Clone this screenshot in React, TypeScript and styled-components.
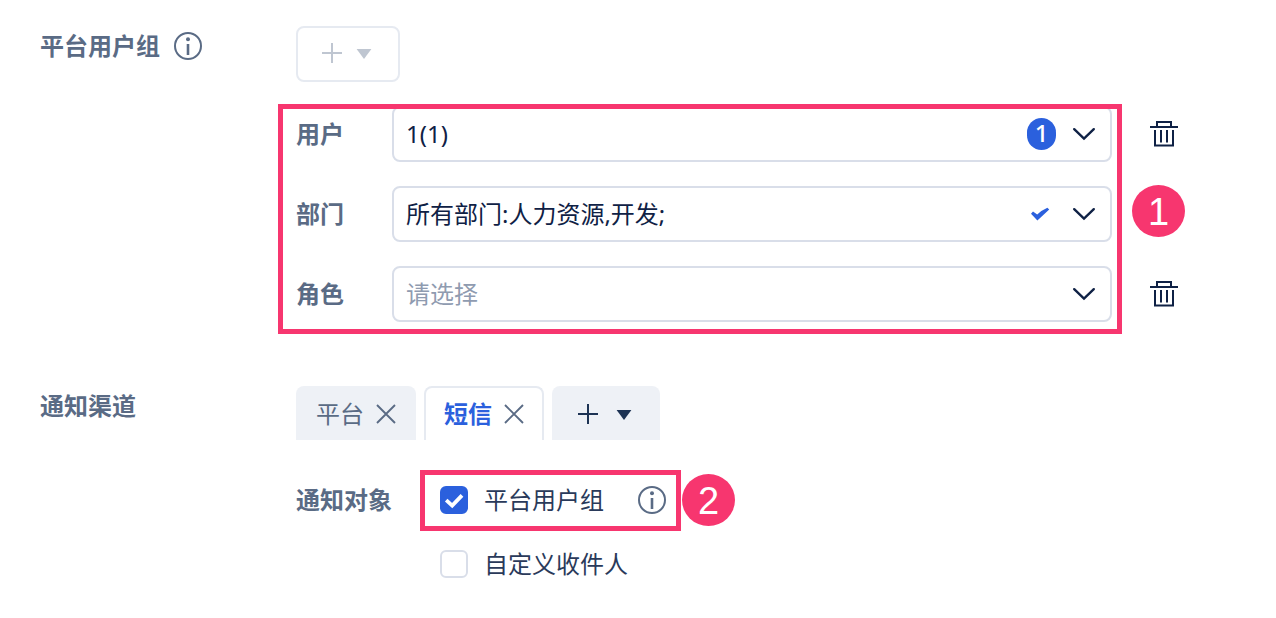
import React from 'react';
import styled, { createGlobalStyle } from 'styled-components';

const color = {
  label: '#5a6b85',
  ink: '#0f2145',
  text: '#2a3a5a',
  muted: '#8f9bb0',
  border: '#d9dee9',
  softBorder: '#e6eaf1',
  disabled: '#bfc6d1',
  tab: '#eef1f6',
  primary: '#2b60dd',
  mark: '#f7366f',
};

const GlobalStyle = createGlobalStyle`
  *, *::before, *::after { box-sizing: border-box; }
  body {
    margin: 0;
    background: #fff;
    color: ${color.text};
    font-family: "Noto Sans", "Noto Sans CJK SC", sans-serif;
    font-size: 24px;
    line-height: 40px;
  }
  button, select, input { font: inherit; color: inherit; margin: 0; }
  svg { display: block; flex: none; }
`;

const Page = styled.main`
  display: flex;
  flex-direction: column;
  gap: 64px;
  padding: 26px 96px 32px 40px;
`;

const Section = styled.section`
  display: grid;
  grid-template-columns: 256px minmax(0, 1fr);
  align-items: start;
`;

const SectionTitle = styled.h2`
  display: flex;
  align-items: center;
  gap: 14px;
  margin: 0;
  font-size: 24px;
  font-weight: 700;
  color: ${color.label};
`;

const Stack = styled.div<{ $gap: number }>`
  position: relative;
  display: flex;
  flex-direction: column;
  gap: ${(p) => p.$gap}px;
`;

const IconButton = styled.button`
  display: flex;
  align-items: center;
  justify-content: center;
  padding: 0;
  border: 0;
  background: none;
  color: ${color.label};
  cursor: pointer;
`;

const AddButton = styled(IconButton)`
  justify-content: flex-start;
  gap: 14px;
  width: 104px;
  height: 56px;
  padding: 0 24px 2px;
  border: 2px solid ${color.softBorder};
  border-radius: 8px;
  background: #fff;
  color: ${color.disabled};
`;

const AddTabButton = styled(IconButton)`
  justify-content: flex-start;
  gap: 18px;
  width: 108px;
  height: 54px;
  padding: 2px 26px 0;
  border-radius: 8px 8px 0 0;
  background: ${color.tab};
  color: #1d3354;
`;

const FieldRow = styled.div`
  display: grid;
  grid-template-columns: 96px minmax(0, 1fr) 32px;
  align-items: center;
`;

const FieldLabel = styled.label`
  font-weight: 700;
  color: ${color.label};
`;

const SelectWrap = styled.div`
  position: relative;
  margin-right: 36px;
`;

const Select = styled.select<{ $empty?: boolean }>`
  display: block;
  appearance: none;
  width: 100%;
  height: 56px;
  padding: 0 96px 0 12px;
  border: 2px solid ${color.border};
  border-radius: 8px;
  background: #fff;
  color: ${(p) => (p.$empty ? color.muted : color.ink)};
`;

const SelectAdornment = styled.div`
  position: absolute;
  top: 0;
  right: 16px;
  bottom: 0;
  display: flex;
  align-items: center;
  gap: 16px;
  color: ${color.ink};
  pointer-events: none;
`;

const Count = styled.span`
  width: 29px;
  height: 32px;
  border-radius: 16px;
  background: ${color.primary};
  color: #fff;
  font-weight: 500;
  line-height: 30px;
  text-align: center;
`;

const Tabs = styled.div`
  display: flex;
  gap: 8px;
`;

const Tab = styled.div<{ $active?: boolean }>`
  display: flex;
  align-items: center;
  gap: 12px;
  height: 54px;
  padding: ${(p) => (p.$active ? '0 18px' : '2px 20px 0')};
  border: ${(p) => (p.$active ? `2px solid ${color.softBorder}` : '0')};
  border-bottom: 0;
  border-radius: 8px 8px 0 0;
  background: ${(p) => (p.$active ? '#fff' : color.tab)};
`;

const TabName = styled.button<{ $active?: boolean }>`
  padding: 0;
  border: 0;
  background: none;
  color: ${(p) => (p.$active ? color.primary : color.label)};
  font-weight: ${(p) => (p.$active ? 700 : 400)};
  cursor: pointer;
`;

const Recipients = styled.div`
  display: grid;
  grid-template-columns: 144px minmax(0, 1fr);
  align-items: start;
`;

const GroupName = styled.span`
  font-weight: 700;
  color: ${color.label};
`;

const Option = styled.div`
  position: relative;
  display: flex;
  align-items: center;
  gap: 34px;
  width: fit-content;
`;

const OptionLabel = styled.label`
  display: flex;
  align-items: center;
  gap: 16px;
`;

const CheckWrap = styled.span`
  display: grid;
  place-items: center;

  > * { grid-area: 1 / 1; }
  > svg { visibility: hidden; pointer-events: none; }
  > input:checked + svg { visibility: visible; }
`;

const Checkbox = styled.input`
  appearance: none;
  width: 28px;
  height: 28px;
  border: 2px solid ${color.border};
  border-radius: 6px;
  background: #fff;

  &:checked {
    border-color: ${color.primary};
    background: ${color.primary};
  }
`;

const Highlight = styled.div<{ $inset: string }>`
  position: absolute;
  inset: ${(p) => p.$inset};
  border: 5px solid ${color.mark};
  pointer-events: none;
`;

const StepMark = styled.span<{ $top: number; $gap: number }>`
  position: absolute;
  top: ${(p) => p.$top}px;
  left: calc(100% + ${(p) => p.$gap}px);
  width: 53px;
  height: 52px;
  border-radius: 50%;
  background: ${color.mark};
  color: #fff;
  font-family: "Liberation Sans", sans-serif;
  font-size: 38px;
  line-height: 54px;
  text-align: center;
`;

const InfoIcon = () => (
  <svg width="28" height="28" viewBox="0 0 28 28" fill="none" aria-hidden="true">
    <circle cx="14" cy="14" r="13" stroke="currentColor" strokeWidth="2" />
    <circle cx="14" cy="7.2" r="2" fill="currentColor" />
    <path d="M14 12v11" stroke="currentColor" strokeWidth="2.6" />
  </svg>
);

const PlusIcon = () => (
  <svg width="20" height="20" viewBox="0 0 20 20" fill="none" aria-hidden="true">
    <path d="M10 0v20M0 10h20" stroke="currentColor" strokeWidth="2" />
  </svg>
);

const CaretIcon = () => (
  <svg width="16" height="20" viewBox="0 0 16 20" aria-hidden="true">
    <path d="M0.6 6h14.8L8 16z" fill="currentColor" />
  </svg>
);

const ChevronIcon = () => (
  <svg width="24" height="24" viewBox="0 0 24 24" fill="none" aria-hidden="true">
    <path d="M2.2 7.2L12 16.6l9.8-9.4" stroke="currentColor" strokeWidth="2.4" strokeLinecap="round" />
  </svg>
);

const TickIcon = () => (
  <svg width="32" height="24" viewBox="0 0 32 24" aria-hidden="true">
    <path
      d="M7 11.8L9 9.6l4.2 2.8Q17.5 8.4 23.4 5.8L25.2 7.4 13.4 18.6z"
      fill={color.primary}
    />
  </svg>
);

const CheckIcon = () => (
  <svg width="28" height="28" viewBox="0 0 28 28" fill="none" aria-hidden="true">
    <path d="M6.2 14.2l6 5.4L22 9.4" stroke="#fff" strokeWidth="3.8" />
  </svg>
);

const CloseIcon = () => (
  <svg width="20" height="20" viewBox="0 0 20 20" fill="none" aria-hidden="true">
    <path d="M1 1l18 18M19 1L1 19" stroke="currentColor" strokeWidth="1.9" />
  </svg>
);

const TrashIcon = () => (
  <svg width="28" height="28" viewBox="0 0 28 28" fill="none" stroke={color.ink} strokeWidth="2" aria-hidden="true">
    <path d="M0 7h28M7 7V2h14v5M5 10v15.5h18V10M11 10v12.5M17 10v12.5" />
  </svg>
);

type FieldProps = {
  id: string;
  label: string;
  value: string;
  empty?: boolean;
  status?: React.ReactNode;
  removable?: boolean;
};

const Field = ({ id, label, value, empty, status, removable }: FieldProps) => (
  <FieldRow>
    <FieldLabel htmlFor={id}>{label}</FieldLabel>
    <SelectWrap>
      <Select id={id} $empty={empty}>
        <option>{value}</option>
      </Select>
      <SelectAdornment>
        {status}
        <ChevronIcon />
      </SelectAdornment>
    </SelectWrap>
    {removable && (
      <IconButton type="button" aria-label={`删除${label}`}>
        <TrashIcon />
      </IconButton>
    )}
  </FieldRow>
);

const CheckOption = ({ label, checked }: { label: string; checked?: boolean }) => (
  <OptionLabel>
    <CheckWrap>
      <Checkbox type="checkbox" defaultChecked={checked} />
      <CheckIcon />
    </CheckWrap>
    {label}
  </OptionLabel>
);

const ChannelTab = ({ name, active }: { name: string; active?: boolean }) => (
  <Tab $active={active}>
    <TabName type="button" $active={active}>{name}</TabName>
    <IconButton type="button" aria-label={`关闭${name}`}>
      <CloseIcon />
    </IconButton>
  </Tab>
);

export default function App() {
  return (
    <>
      <GlobalStyle />
      <Page>
        <Section>
          <SectionTitle>
            平台用户组
            <InfoIcon />
          </SectionTitle>
          <Stack $gap={24}>
            <AddButton type="button" aria-label="添加用户组" disabled>
              <PlusIcon />
              <CaretIcon />
            </AddButton>
            <Stack $gap={24}>
              <Field id="user" label="用户" value="1(1)" status={<Count>1</Count>} removable />
              <Field id="department" label="部门" value="所有部门:人力资源,开发;" status={<TickIcon />} />
              <Field id="role" label="角色" value="请选择" empty removable />
              <Highlight $inset="-2px 58px -12px -18px">
                <StepMark $top={76} $gap={15}>1</StepMark>
              </Highlight>
            </Stack>
          </Stack>
        </Section>

        <Section>
          <SectionTitle>通知渠道</SectionTitle>
          <Stack $gap={40}>
            <Tabs>
              <ChannelTab name="平台" />
              <ChannelTab name="短信" active />
              <AddTabButton type="button" aria-label="添加渠道">
                <PlusIcon />
                <CaretIcon />
              </AddTabButton>
            </Tabs>
            <Recipients role="group" aria-labelledby="recipients">
              <GroupName id="recipients">通知对象</GroupName>
              <Stack $gap={24}>
                <Option>
                  <CheckOption label="平台用户组" checked />
                  <IconButton type="button" aria-label="说明">
                    <InfoIcon />
                  </IconButton>
                  <Highlight $inset="-10px -15px -11px -20px">
                    <StepMark $top={-1} $gap={6}>2</StepMark>
                  </Highlight>
                </Option>
                <Option>
                  <CheckOption label="自定义收件人" />
                </Option>
              </Stack>
            </Recipients>
          </Stack>
        </Section>
      </Page>
    </>
  );
}
